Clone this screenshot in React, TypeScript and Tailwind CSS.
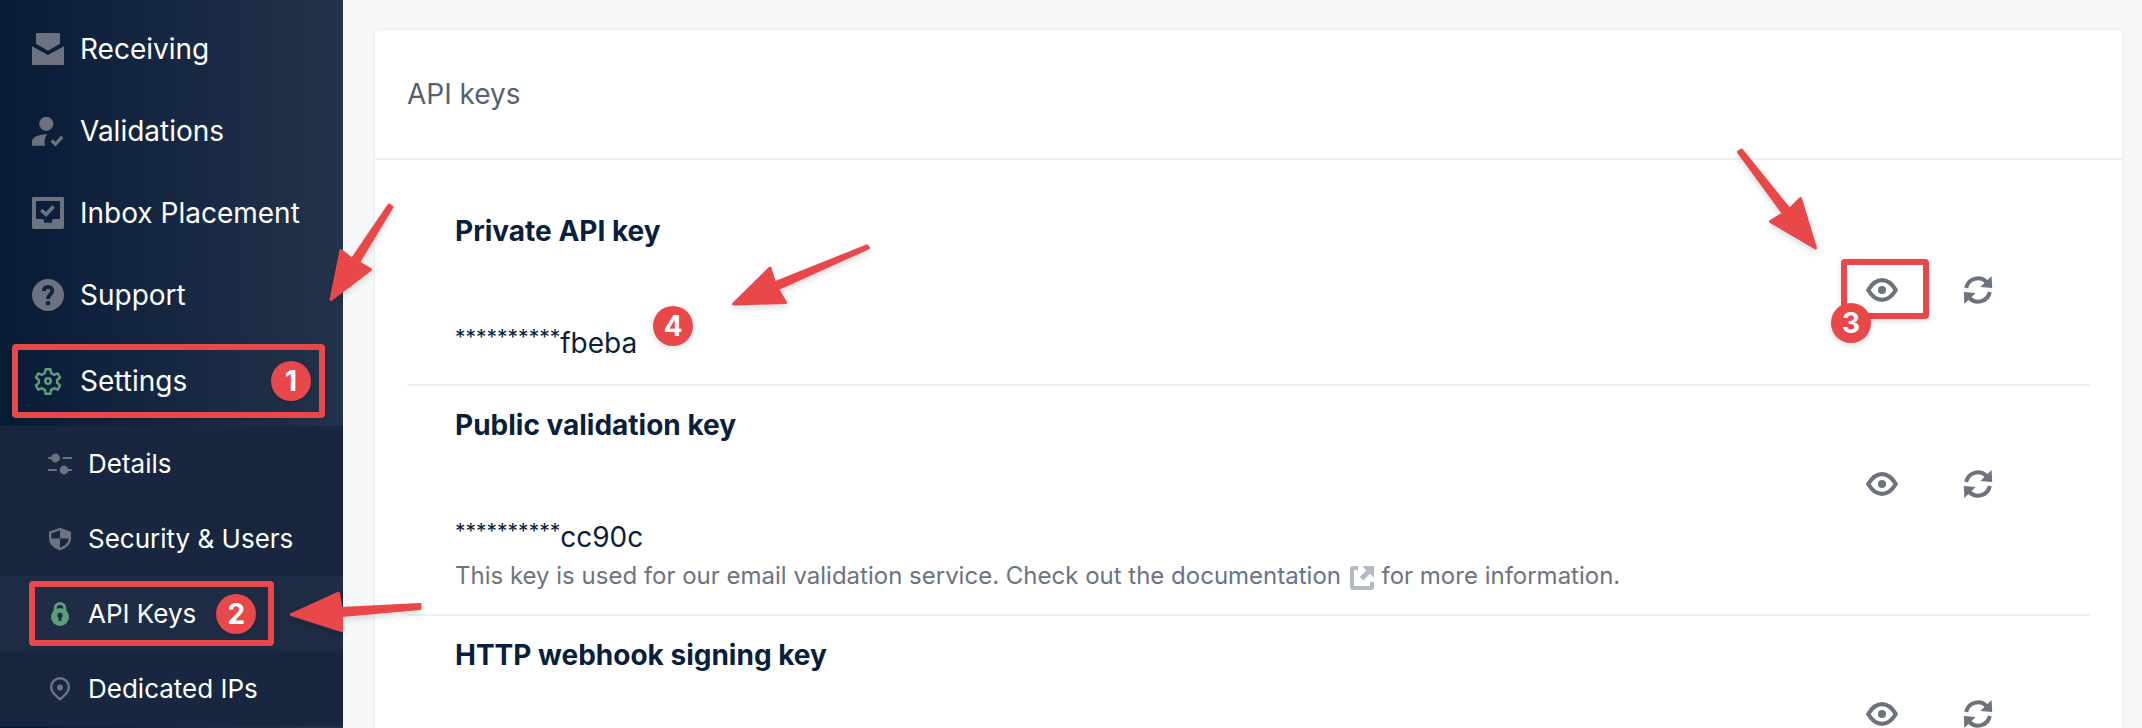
import type { ReactNode } from "react";

const RED = "#e84849";

/* ---------- Navigation icons ---------- */

function ReceivingIcon() {
  return (
    <svg viewBox="0 0 32 32" className="size-8" fill="currentColor" aria-hidden="true">
      <path d="M5 0h22a1 1 0 0 1 1 1v9.7l-12 7-12-7V1a1 1 0 0 1 1-1z" />
      <path d="M0 13.3l16 8.6 16-8.6V31a1 1 0 0 1-1 1H1a1 1 0 0 1-1-1z" />
    </svg>
  );
}

function ValidationsIcon() {
  return (
    <svg viewBox="0 0 32 32" className="size-8" fill="currentColor" aria-hidden="true">
      <circle cx="14.3" cy="8.8" r="7.1" />
      <path d="M0 30.7v-4.2c0-4.3 8-7.4 15-7.2-2.3 3.2-3 7-2 11.4z" />
      <path d="M19.6 25.6l3.8 3.6 6.9-7.4" fill="none" stroke="currentColor" strokeWidth="3.4" />
    </svg>
  );
}

function InboxIcon() {
  return (
    <svg viewBox="0 0 32 32" className="size-8" fill="currentColor" aria-hidden="true">
      <path
        fillRule="evenodd"
        d="M1.4 0h29.2A1.4 1.4 0 0 1 32 1.4v29.2a1.4 1.4 0 0 1-1.4 1.4H1.4A1.4 1.4 0 0 1 0 30.6V1.4A1.4 1.4 0 0 1 1.4 0zM4 4v18h6.4a1.6 1.6 0 0 1 1.6 1.6v2.2h8v-2.2a1.6 1.6 0 0 1 1.6-1.6H28V4z"
      />
      <path d="M9.2 13l4.8 4.4 7.6-8" fill="none" stroke="currentColor" strokeWidth="3.6" />
    </svg>
  );
}

function SupportIcon() {
  return (
    <svg viewBox="0 0 32 32" className="size-8" fill="currentColor" aria-hidden="true">
      <circle cx="16" cy="16" r="16" />
      <path
        d="M11.8 11.9c0-2.4 1.8-4 4.2-4s4.3 1.6 4.3 4c0 3.4-4.3 3.5-4.3 8"
        fill="none"
        stroke="#11223d"
        strokeWidth="3.8"
      />
      <circle cx="16" cy="24.3" r="2.3" fill="#11223d" />
    </svg>
  );
}

function SettingsIcon() {
  return (
    <svg
      viewBox="0 0 32 32"
      className="size-8"
      fill="none"
      stroke="currentColor"
      strokeWidth="2.4"
      strokeLinejoin="round"
      aria-hidden="true"
    >
      <path d="M13.6 4.2h4.8l.7 3.9 2.9 1.7 3.7-1.4 2.4 4.1-3 2.5v2.9l3 2.6-2.4 4.1-3.7-1.4-2.9 1.7-.7 3.9h-4.8l-.7-3.9L10 23.2l-3.7 1.4-2.4-4.1 3-2.6V15l-3-2.5 2.4-4.1L10 9.8l2.9-1.7z" />
      <circle cx="16" cy="16" r="2.8" />
    </svg>
  );
}

function DetailsIcon() {
  return (
    <svg viewBox="0 0 24 24" className="size-6" fill="currentColor" aria-hidden="true">
      <path
        d="M1 6h10M15.5 6h7.5M1 18h7M14 18h9"
        stroke="currentColor"
        strokeWidth="2.2"
        strokeLinecap="round"
      />
      <circle cx="7.4" cy="6" r="4.4" />
      <circle cx="16" cy="18" r="4.4" />
    </svg>
  );
}

function ShieldIcon() {
  return (
    <svg viewBox="0 0 24 24" className="size-6" fill="currentColor" aria-hidden="true">
      <path
        fillRule="evenodd"
        d="M12 .8l11 4v6.6c0 5.6-4.8 9.8-11 11.9C5.8 21.2 1 17 1 11.4V4.8zM12 3.2L3.4 6.4v5.2H12zM12 11.6v9.2c4.8-1.8 8.5-4.9 8.6-9.2z"
      />
    </svg>
  );
}

function LockIcon() {
  return (
    <svg viewBox="0 0 24 24" className="size-6" fill="currentColor" aria-hidden="true">
      <path d="M7.2 9V6a4.8 4.4 0 0 1 9.6 0v3" fill="none" stroke="currentColor" strokeWidth="3" />
      <circle cx="12" cy="15" r="9" />
      <circle cx="12" cy="13.4" r="2.6" fill="#1e2d45" />
      <path d="M10.600 14h2.800v5h-2.800z" fill="#1e2d45" />
    </svg>
  );
}

function PinIcon() {
  return (
    <svg viewBox="0 0 24 24" className="size-6" fill="none" stroke="currentColor" aria-hidden="true">
      <path
        d="M12 22.3c-2.6-2.2-8.9-6.3-8.9-12.2a8.9 8.9 0 0 1 17.8 0c0 5.9-6.3 10-8.9 12.2z"
        strokeWidth="2.4"
      />
      <circle cx="12" cy="10.4" r="3" fill="currentColor" stroke="none" />
    </svg>
  );
}

/* ---------- Content icons ---------- */

function EyeIcon() {
  return (
    <svg viewBox="0 0 32 32" className="size-8" fill="none" stroke="currentColor" aria-hidden="true">
      <path
        d="M2.2 16C5.200 11 9.800 6.100 16 6.100S26.800 11 29.800 16C26.800 21 22.200 25.900 16 25.900S5.200 21 2.200 16z"
        strokeWidth="4.2"
        strokeLinejoin="round"
      />
      <circle cx="16" cy="16" r="4" fill="currentColor" stroke="none" />
    </svg>
  );
}

function RefreshIcon() {
  return (
    <svg viewBox="0 0 32 32" className="size-8" fill="currentColor" aria-hidden="true">
      <path
        d="M4.2 14A12 12 0 0 1 24.6 8M27.8 18A12 12 0 0 1 7.4 24"
        fill="none"
        stroke="currentColor"
        strokeWidth="4"
      />
      <path d="M29.600 2l.6 12-11.800-.9 4.300-4.300z" />
      <path d="M2.400 30l-.6-12 11.800.9-4.300 4.300z" />
    </svg>
  );
}

function ExternalIcon() {
  return (
    <svg
      viewBox="0 0 24 24"
      className="mr-px ml-0.5 inline size-6 align-[-6px] text-[#b4bac4]"
      fill="currentColor"
      aria-hidden="true"
    >
      <path d="M8 0H3a3 3 0 0 0-3 3v18a3 3 0 0 0 3 3h18a3 3 0 0 0 3-3v-5h-4v4H4V4h4z" />
      <path d="M12.300 0H24v11.700l-4-4-6.800 6.800-3.500-3.500 6.500-6.500z" />
    </svg>
  );
}

/* ---------- Annotations ---------- */

function Badge({ n, className = "" }: { n: number; className?: string }) {
  return (
    <span
      className={`flex size-10 items-center justify-center rounded-full bg-[#e84849] text-[28px] leading-10 font-bold text-white shadow-[0_2px_6px_rgba(0,0,0,0.14)] ${className}`}
    >
      {n}
    </span>
  );
}

function Frame({ className }: { className: string }) {
  return (
    <span
      aria-hidden="true"
      className={`pointer-events-none absolute rounded-sm border-6 border-[#e84849] shadow-[0_2px_6px_rgba(0,0,0,0.14)] ${className}`}
    />
  );
}

function Arrow({ points, viewBox, className }: { points: string; viewBox: string; className: string }) {
  return (
    <svg
      viewBox={viewBox}
      aria-hidden="true"
      className={`pointer-events-none absolute z-10 overflow-visible drop-shadow-[0_3px_3px_rgba(0,0,0,0.14)] ${className}`}
    >
      <polygon points={points} fill={RED} stroke={RED} strokeWidth="3" strokeLinejoin="round" />
    </svg>
  );
}

/* ---------- Sidebar ---------- */

const mainItems: { label: string; icon: ReactNode }[] = [
  { label: "Receiving", icon: <ReceivingIcon /> },
  { label: "Validations", icon: <ValidationsIcon /> },
  { label: "Inbox Placement", icon: <InboxIcon /> },
  { label: "Support", icon: <SupportIcon /> },
];

function SubItem({
  label,
  icon,
  active = false,
  children,
}: {
  label: string;
  icon: ReactNode;
  active?: boolean;
  children?: ReactNode;
}) {
  return (
    <li className={`relative ${active ? "bg-[#1e2d45]" : ""}`}>
      <a href="#" className="flex h-[75px] items-center pl-12 text-[26px] text-white">
        <span className={active ? "text-[#5d9f77]" : "text-[#6c737e]"}>{icon}</span>
        <span className="ml-4">{label}</span>
        {children}
      </a>
    </li>
  );
}

function Sidebar() {
  return (
    <nav className="relative w-[343px] shrink-0 bg-linear-to-r from-[#071c35] via-[#10213d] via-25% to-[#23334b] pt-2">
      <ul>
        {mainItems.map((item) => (
          <li key={item.label}>
            <a href="#" className="flex h-[82px] items-center pl-8 text-[28px] text-white">
              <span className="text-[#6c737e]">{item.icon}</span>
              <span className="ml-4">{item.label}</span>
            </a>
          </li>
        ))}
        <li>
          <a href="#" className="relative flex h-[90px] items-center pr-8 pl-8 text-[28px] text-white">
            <span className="text-[#5d9f77]">
              <SettingsIcon />
            </span>
            <span className="ml-4">Settings</span>
            <Badge n={1} className="ml-auto" />
            <Frame className="inset-y-2 right-[18px] left-3" />
          </a>
          <ul className="bg-[#18273f]">
            <SubItem label="Details" icon={<DetailsIcon />} />
            <SubItem label="Security & Users" icon={<ShieldIcon />} />
            <SubItem label="API Keys" icon={<LockIcon />} active>
              <Badge n={2} className="ml-5" />
              <Frame className="inset-y-[5px] right-[69px] left-[29px]" />
            </SubItem>
            <SubItem label="Dedicated IPs" icon={<PinIcon />} />
          </ul>
        </li>
      </ul>
    </nav>
  );
}

/* ---------- Keys ---------- */

interface KeyRowProps {
  title: string;
  tail?: string;
  note?: ReactNode;
  valueMark?: ReactNode;
  viewMark?: ReactNode;
}

function KeyRow({ title, tail, note, valueMark, viewMark }: KeyRowProps) {
  return (
    <li className="flex border-b-2 border-[#f1f1f1] pt-[18px] pr-24 pb-5 pl-12">
      <div className="flex-1 leading-[42px]">
        <h2 className="text-[28px] font-bold">{title}</h2>
        {tail && (
          <p className="relative mt-[70px] w-fit text-[28px]">
            <span className="relative -top-2 text-[21px] leading-0">**********</span>
            {tail}
            {valueMark}
          </p>
        )}
        {note && <p className="text-2xl leading-9 text-[#6c737e]">{note}</p>}
      </div>
      <div className="mt-16 flex items-start gap-16 text-[#6c737e]">
        <button type="button" aria-label={`Show ${title}`} className="relative">
          <EyeIcon />
          {viewMark}
        </button>
        <button type="button" aria-label={`Reset ${title}`}>
          <RefreshIcon />
        </button>
      </div>
    </li>
  );
}

export default function App() {
  return (
    <div className="relative flex h-screen overflow-hidden bg-[#f7f8fa] font-[Inter,sans-serif] text-[#0a1f3b]">
      <Sidebar />
      <main className="min-w-0 flex-1 pt-[30px] pr-5 pl-8">
        <section className="h-full rounded-t-sm bg-white shadow-[0_0_3px_rgba(30,50,80,0.16)]">
          <header className="border-b-2 border-[#f1f1f1] px-8 py-[43px]">
            <h1 className="text-[28px] leading-[42px] text-[#556274]">API keys</h1>
          </header>
          <ul className="px-8 pt-8">
            <KeyRow
              title="Private API key"
              tail="fbeba"
              valueMark={<Badge n={4} className="absolute -top-4 left-full ml-4" />}
              viewMark={
                <>
                  <Frame className="-top-[15px] -left-[25px] h-[60px] w-[88px]" />
                  <Badge n={3} className="absolute top-[29px] -left-[35px]" />
                </>
              }
            />
            <KeyRow
              title="Public validation key"
              tail="cc90c"
              note={
                <>
                  This key is used for our email validation service. Check out the{" "}
                  <a href="#" className="text-[#66738a]">
                    documentation <ExternalIcon />
                  </a>{" "}
                  for more information.
                </>
              }
            />
            <KeyRow title="HTTP webhook signing key" />
          </ul>
        </section>
      </main>

      <Arrow
        className="top-[200px] left-[326px] h-[104px] w-[70px]"
        viewBox="326 200 70 104"
        points="389,205 392,207 358.5,262.5 370.5,269.5 331,299.5 341,250.5 352,259.5"
      />
      <Arrow
        className="top-[588px] left-[286px] h-[48px] w-[138px]"
        viewBox="286 588 138 48"
        points="420,604.5 420,608.5 341.5,615.5 341.5,630.5 291.5,614.5 338.5,593 341,608.5"
      />
      <Arrow
        className="top-[240px] left-[728px] h-[70px] w-[146px]"
        viewBox="728 240 146 70"
        points="867,246 868.5,248 777.5,289 785.5,302.5 733.5,304 770,268 774.5,283"
      />
      <Arrow
        className="top-[146px] right-[322px] h-[108px] w-[86px]"
        viewBox="1734 146 86 108"
        points="1738.5,152 1741.5,150 1789.5,209.5 1800.5,198.5 1815.5,248 1770.5,221.5 1783.5,213.5"
      />
    </div>
  );
}
